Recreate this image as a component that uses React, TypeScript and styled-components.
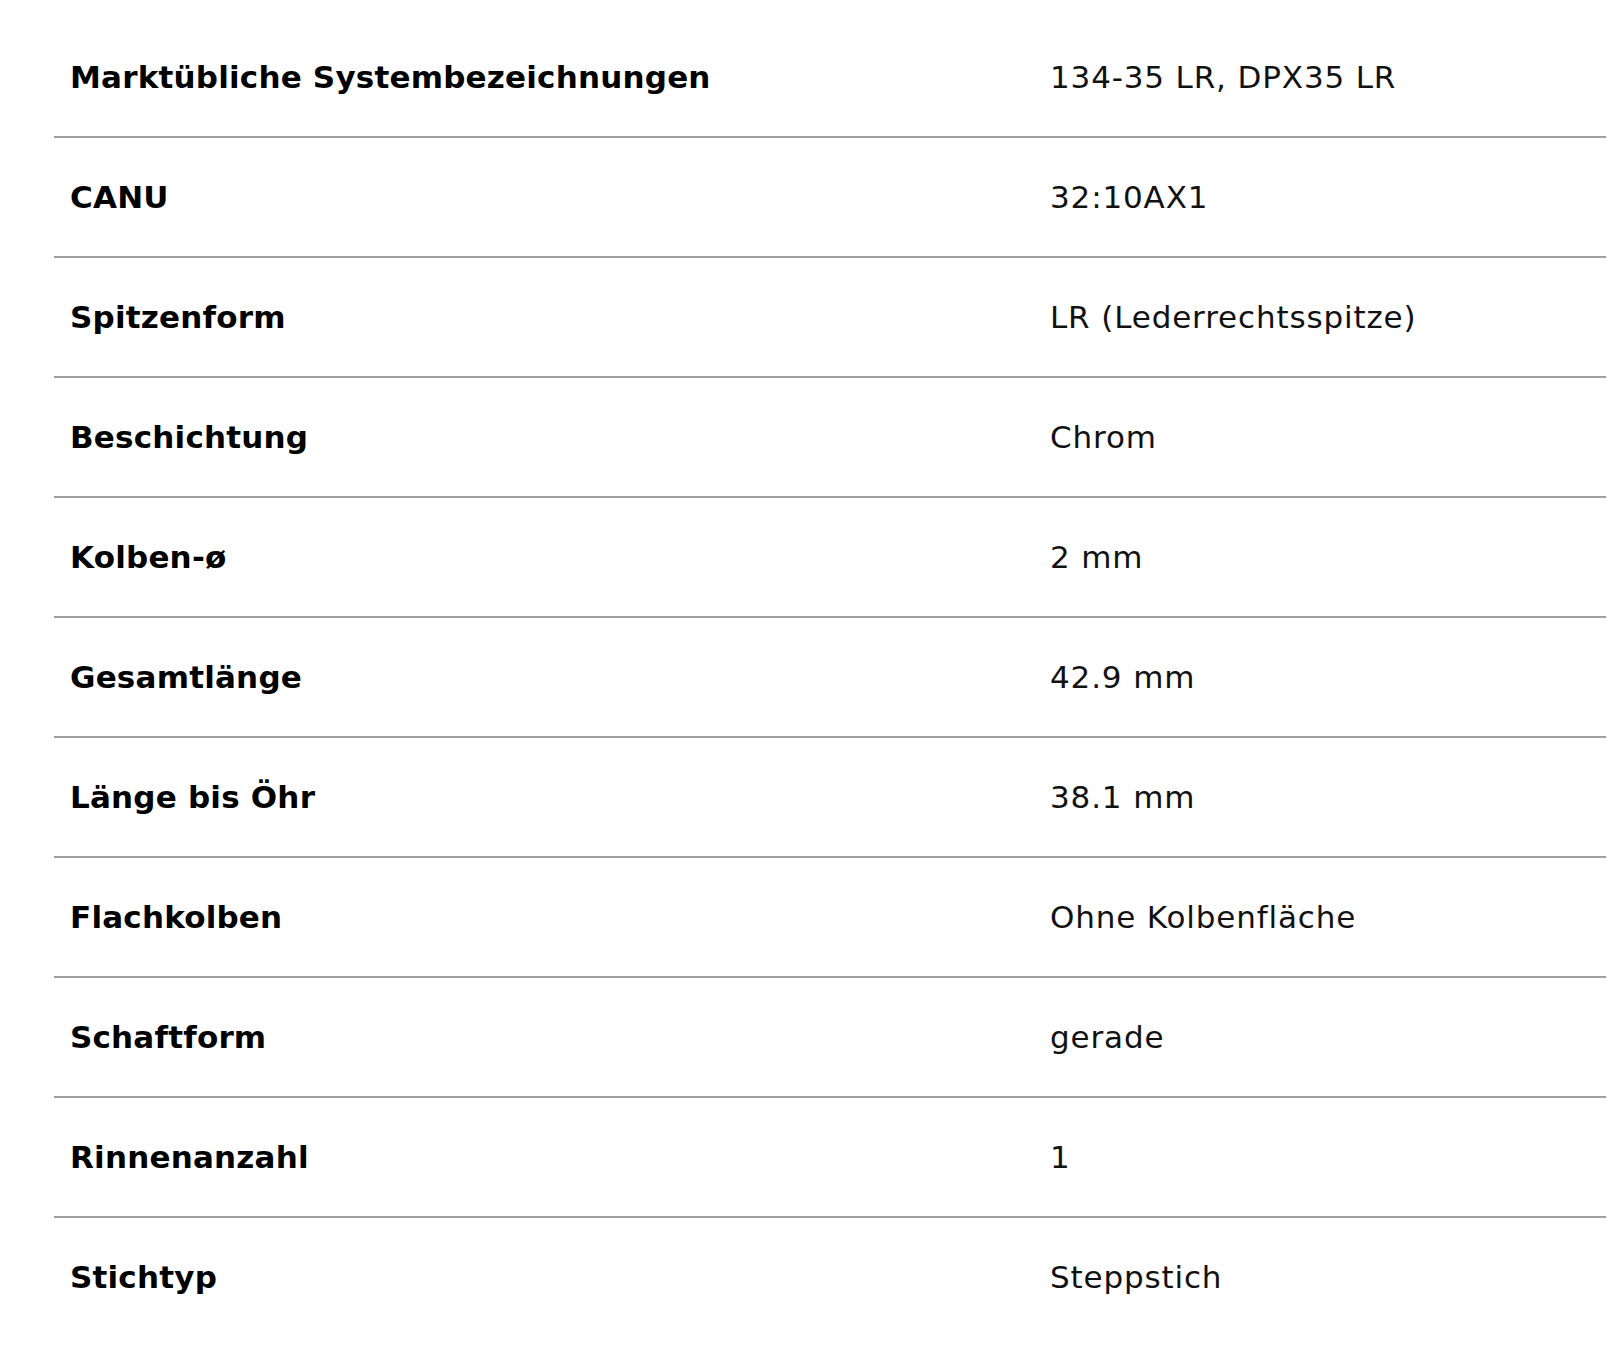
import styled, { createGlobalStyle } from "styled-components";

// data
interface ISpec {
  label: string;
  value: string;
}

const specs: ISpec[] = [
  { label: "Marktübliche Systembezeichnungen", value: "134-35 LR, DPX35 LR" },
  { label: "CANU", value: "32:10AX1" },
  { label: "Spitzenform", value: "LR (Lederrechtsspitze)" },
  { label: "Beschichtung", value: "Chrom" },
  { label: "Kolben-ø", value: "2 mm" },
  { label: "Gesamtlänge", value: "42.9 mm" },
  { label: "Länge bis Öhr", value: "38.1 mm" },
  { label: "Flachkolben", value: "Ohne Kolbenfläche" },
  { label: "Schaftform", value: "gerade" },
  { label: "Rinnenanzahl", value: "1" },
  { label: "Stichtyp", value: "Steppstich" },
];

function App() {
  return (
    <>
      <GlobalStyle />
      <Table>
        {specs.map((spec, i) => (
          <Row key={spec.label} isLast={i === specs.length - 1}>
            <Label>{spec.label}</Label>
            <Value>{spec.value}</Value>
          </Row>
        ))}
      </Table>
    </>
  );
}

const GlobalStyle = createGlobalStyle`
  body {
    margin: 0;
    background: #ffffff;
    font-family: "DejaVu Sans", Lato, sans-serif;
    color: #000;
  }
`;

const Table = styled.div`
  display: flex;
  flex-direction: column;
  width: 1552px;
  margin: 18px 0 0 54px;
`;

const Row = styled.div<{ isLast: boolean }>`
  display: grid;
  grid-template-columns: 980px 1fr;
  align-items: center;
  height: 118px;
  border-bottom: 2px solid
    ${(props) => (props.isLast ? "transparent" : "#a0a0a0")};
`;

const Label = styled.span`
  padding-left: 16px;
  font-size: 31px;
  font-weight: 700;
  letter-spacing: 0.2px;
  color: #000;
`;

const Value = styled.span`
  padding-left: 16px;
  font-size: 31px;
  font-weight: 400;
  letter-spacing: 0.85px;
  color: #111;
`;

export default App;
